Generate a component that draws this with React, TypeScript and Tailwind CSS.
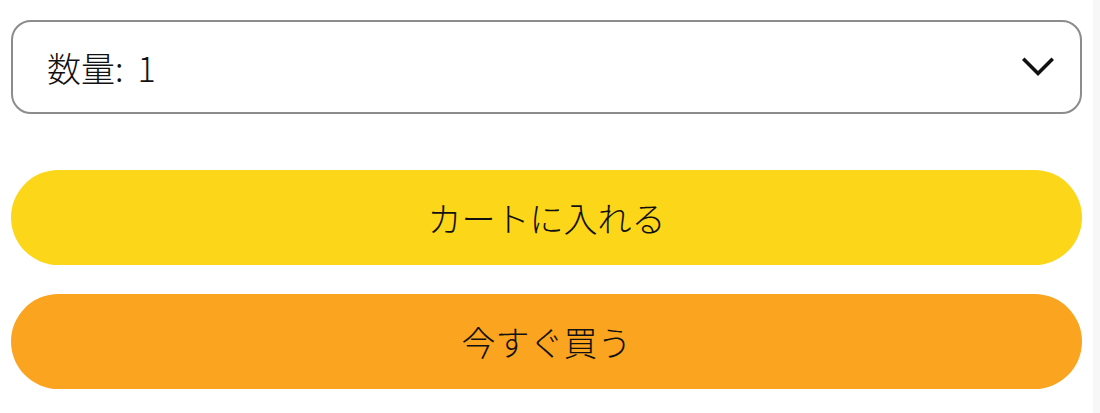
import { useState } from 'react';

const jpFont = { fontFamily: '"Noto Sans CJK JP", "Noto Sans", sans-serif' };

function ChevronDown() {
    return (
        <svg width="32" height="20" viewBox="0 0 32 20" fill="none" aria-hidden="true">
            <path d="M2.5 3 L16 16.5 L29.5 3" stroke="#111" strokeWidth="3.6" strokeLinecap="square" strokeLinejoin="miter" />
        </svg>
    );
}

export default function App() {
    const [qty] = useState(1);

    return (
        <div className="flex h-[413px] w-[1100px] bg-white text-[#111]" style={jpFont}>
            <div className="flex w-[1093px] flex-col px-[11px] pt-[20px]">
                {/* quantity picker */}
                <button
                    type="button"
                    className="flex h-[94px] w-full items-center justify-between rounded-[20px] border-2 border-[#8c8c8c] bg-white pl-[34px] pr-[26px] text-[34px] font-light"
                >
                    <span>
                        数量:<span className="ml-[14px]">{qty}</span>
                    </span>
                    <ChevronDown />
                </button>

                <button
                    type="button"
                    className="mt-[56px] flex h-[95px] w-full items-center justify-center rounded-full bg-[#fcd618] text-[34px] font-light text-[#111]"
                >
                    カートに入れる
                </button>

                <button
                    type="button"
                    className="mt-[29px] flex h-[95px] w-full items-center justify-center rounded-full bg-[#fba41f] text-[34px] font-light text-[#111]"
                >
                    今すぐ買う
                </button>
            </div>
            <div className="h-full w-[7px] bg-[#f7f7f7]" />
        </div>
    );
}
